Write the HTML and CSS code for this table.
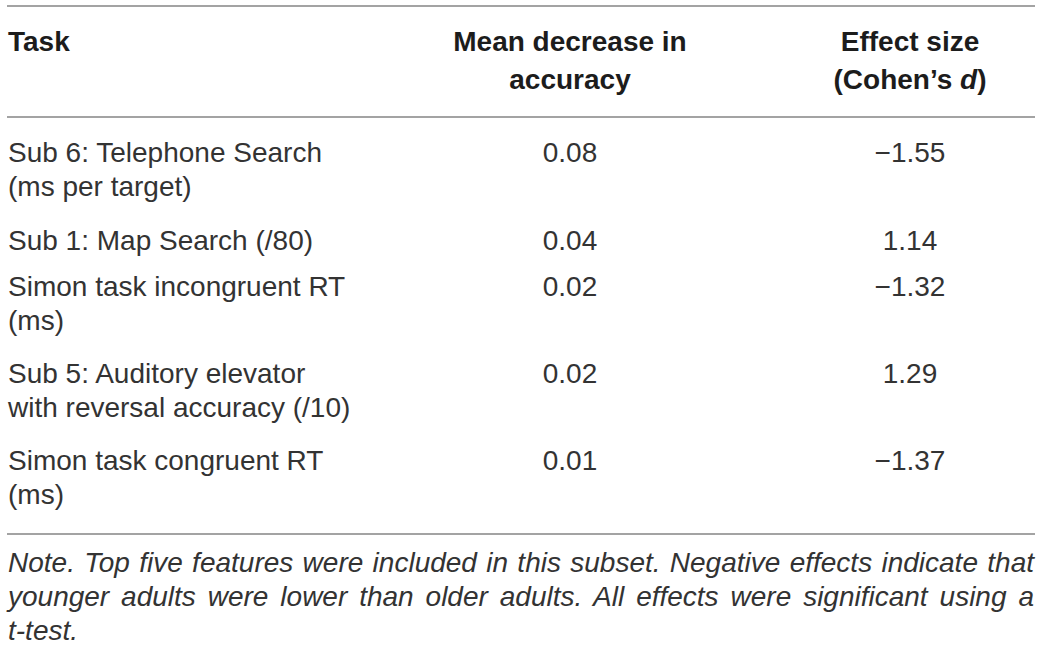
FILE: index.html
```html
<!DOCTYPE html>
<html lang="en">
<head>
<meta charset="utf-8">
<title>Table</title>
<link rel="stylesheet" href="styles.css">
</head>
<body>
<div class="wrap">
  <table class="tbl">
    <colgroup>
      <col class="c1">
      <col class="c2">
      <col class="c3">
    </colgroup>
    <thead>
      <tr>
        <th class="left">Task</th>
        <th class="mid">Mean decrease in<br>accuracy</th>
        <th class="right">Effect size<br>(Cohen’s <i>d</i>)</th>
      </tr>
    </thead>
    <tbody>
      <tr class="r1">
        <td class="left">Sub 6: Telephone Search<br>(ms per target)</td>
        <td class="mid">0.08</td>
        <td class="right">−1.55</td>
      </tr>
      <tr class="r2">
        <td class="left">Sub 1: Map Search (/80)</td>
        <td class="mid">0.04</td>
        <td class="right">1.14</td>
      </tr>
      <tr class="r3">
        <td class="left">Simon task incongruent RT<br>(ms)</td>
        <td class="mid">0.02</td>
        <td class="right">−1.32</td>
      </tr>
      <tr class="r4">
        <td class="left">Sub 5: Auditory elevator<br>with reversal accuracy (/10)</td>
        <td class="mid">0.02</td>
        <td class="right">1.29</td>
      </tr>
      <tr class="r5">
        <td class="left">Simon task congruent RT<br>(ms)</td>
        <td class="mid">0.01</td>
        <td class="right">−1.37</td>
      </tr>
    </tbody>
  </table>
  <p class="note">Note. Top five features were included in this subset. Negative effects indicate that younger adults were lower than older adults. All effects were significant using a <span class="nowrap">t-test.</span></p>
</div>
</body>
</html>
```

FILE: styles.css
```css
html, body {
  margin: 0;
  padding: 0;
  background: #ffffff;
}

body {
  font-family: "Liberation Sans", Arial, sans-serif;
  color: #333333;
}

.wrap {
  width: 1028px;
  padding: 5px 0 0 7px;
}

.tbl {
  width: 1028px;
  border-collapse: collapse;
  table-layout: fixed;
  border-top: 2px solid #a3a3a3;
  border-bottom: 2px solid #a3a3a3;
}

.c1 { width: 400px; }
.c2 { width: 326px; }
.c3 { width: 302px; }

.tbl th {
  font-size: 28px;
  line-height: 38px;
  font-weight: bold;
  color: #1c1c1c;
  vertical-align: top;
  padding: 16px 0 17px 0;
  border-bottom: 2px solid #a3a3a3;
}

.tbl td {
  font-size: 28px;
  line-height: 34px;
  vertical-align: top;
  padding: 10px 0 9px 0;
}

.tbl .left {
  text-align: left;
  padding-left: 1px;
}

.tbl .mid {
  text-align: center;
}

.tbl .right {
  text-align: center;
  padding-left: 52px;
}

.tbl tr.r1 td { padding-top: 18px; padding-bottom: 10px; }
.tbl tr.r2 td { padding-bottom: 2px; }
.tbl tr.r5 td { padding-bottom: 21px; }

.note {
  margin: 11px 0 0 0;
  width: 1026px;
  padding-left: 1px;
  font-size: 28px;
  line-height: 34px;
  font-style: italic;
  text-align: justify;
  color: #333333;
}

.nowrap {
  white-space: nowrap;
}
```
